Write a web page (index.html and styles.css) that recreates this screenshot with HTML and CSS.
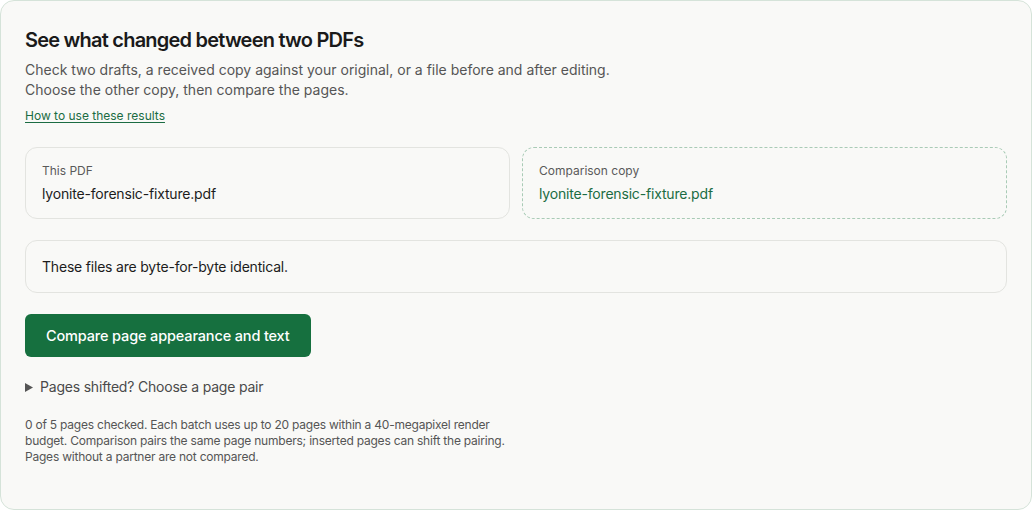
FILE: index.html
```html
<!DOCTYPE html>
<html lang="en">
<head>
<meta charset="utf-8">
<title>Compare PDFs</title>
<link rel="stylesheet" href="styles.css">
</head>
<body>
<section class="card">
  <h1 class="title">See what changed between two PDFs</h1>
  <p class="intro">Check two drafts, a received copy against your original, or a file before and after editing.<br>Choose the other copy, then compare the pages.</p>
  <a class="help" href="#">How to use these results</a>

  <div class="files">
    <div class="file">
      <div class="file-label">This PDF</div>
      <div class="file-name">lyonite-forensic-fixture.pdf</div>
    </div>
    <div class="file file-compare">
      <div class="file-label">Comparison copy</div>
      <div class="file-name file-name-link">lyonite-forensic-fixture.pdf</div>
    </div>
  </div>

  <div class="status">These files are byte-for-byte identical.</div>

  <button class="compare" type="button">Compare page appearance and text</button>

  <details class="pairs">
    <summary class="pairs-summary"><svg class="tri" width="8" height="9" viewBox="0 0 8 9" aria-hidden="true"><path d="M0 0 L8 4.5 L0 9 Z" fill="#555"/></svg><span>Pages shifted? Choose a page pair</span></summary>
  </details>

  <p class="note">0 of 5 pages checked. Each batch uses up to 20 pages within a 40-megapixel render budget. Comparison pairs the same page numbers; inserted pages can shift the pairing. Pages without a partner are not compared.</p>
</section>
</body>
</html>
```

FILE: styles.css
```css
* { box-sizing: border-box; }
html, body {
  margin: 0;
  padding: 0;
  background: #ffffff;
}
body {
  font-family: Inter, "Noto Sans", "Liberation Sans", sans-serif;
  color: #1c1c1c;
}
.card {
  width: 1032px;
  height: 510px;
  background: #f9f9f7;
  border: 1px solid #d5e3d9;
  border-radius: 14px;
  padding: 25px 24px 24px 24px;
  display: flex;
  flex-direction: column;
  align-items: flex-start;
}
.title {
  margin: 0;
  font-size: 20px;
  line-height: 28px;
  font-weight: 600;
  letter-spacing: -0.78px;
  color: #1a1a1a;
}
.intro {
  margin: 6px 0 0;
  font-size: 14px;
  line-height: 20px;
  color: #555555;
}
.help {
  margin-top: 8px;
  font-size: 12px;
  line-height: 16px;
  color: #1b6c43;
  text-decoration: underline;
  text-underline-offset: 2px;
}
.files {
  margin-top: 23px;
  width: 100%;
  display: grid;
  grid-template-columns: 1fr 1fr;
  gap: 12px;
}
.file {
  border: 1px solid #e3e4e0;
  border-radius: 12px;
  padding: 15px 16px 14px;
  display: flex;
  flex-direction: column;
  gap: 5px;
}
.file-compare {
  border: 1px dashed #a9cbb6;
}
.file-label {
  font-size: 12px;
  line-height: 16px;
  color: #5a5a5a;
}
.file-name {
  font-size: 14px;
  line-height: 20px;
  letter-spacing: -0.18px;
  color: #1c1c1c;
}
.file-name-link {
  color: #1b6c43;
}
.status {
  margin-top: 21px;
  width: 100%;
  border: 1px solid #e3e4e0;
  border-radius: 12px;
  padding: 16px 16px 15px;
  font-size: 14px;
  line-height: 20px;
  letter-spacing: -0.2px;
  color: #1c1c1c;
}
.compare {
  margin-top: 21px;
  height: 43px;
  padding: 0 21px;
  border: 0;
  border-radius: 6px;
  background: #16703f;
  color: #ffffff;
  font-family: inherit;
  font-size: 14.5px;
  font-weight: 500;
  letter-spacing: -0.15px;
  line-height: 20px;
  cursor: pointer;
}
.pairs {
  margin-top: 20px;
}
.pairs-summary {
  list-style: none;
  display: flex;
  align-items: center;
  gap: 7px;
  font-size: 14px;
  line-height: 20px;
  letter-spacing: -0.2px;
  color: #4a4a4a;
  cursor: pointer;
}
.pairs-summary::-webkit-details-marker { display: none; }
.tri { display: block; }
.note {
  margin: 20px 0 0;
  max-width: 490px;
  font-size: 12px;
  line-height: 16px;
  letter-spacing: -0.22px;
  color: #555555;
}
```
